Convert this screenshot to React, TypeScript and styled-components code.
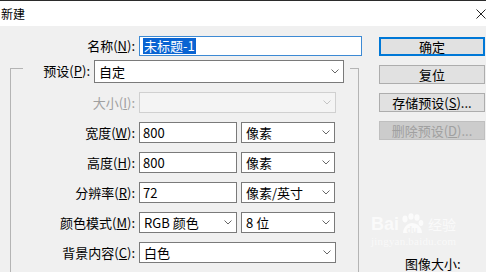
import React from "react";
import styled, { createGlobalStyle } from "styled-components";

const Global = createGlobalStyle`
  html, body { margin: 0; padding: 0; background: #f0f0f0; }
  body {
    font-family: "Noto Sans CJK SC", "Microsoft YaHei", sans-serif;
    font-size: 13px;
    color: #000;
    overflow: hidden;
  }
  * { box-sizing: border-box; }
`;

const Window = styled.div`
  position: relative;
  width: 486px;
  height: 272px;
  overflow: hidden;
  background: #f0f0f0;
  border-top: 1px solid #2b2b2b;
`;

const TitleBar = styled.div`
  height: 25px;
  background: #fff;
  display: flex;
  align-items: center;
  justify-content: space-between;
  padding-left: 1px;
  font-size: 12px;
  line-height: 1;
`;

const CloseIcon = styled.svg`
  width: 10px;
  height: 10px;
  margin-top: 1px;
`;

const Body = styled.div`
  display: flex;
  padding-top: 10px;
`;

const LeftCol = styled.div`
  width: 362px;
  display: flex;
  flex-direction: column;
`;

const Row = styled.div<{ $h?: number }>`
  display: flex;
  align-items: center;
  gap: 4px;
  height: ${(p) => p.$h ?? 21}px;
`;

const Label = styled.label<{ $w: number; $disabled?: boolean; $top?: number }>`
  width: ${(p) => p.$w}px;
  margin-top: ${(p) => p.$top ?? 0}px;
  text-align: right;
  white-space: nowrap;
  font-size: 13px;
  line-height: 16px;
  color: ${(p) => (p.$disabled ? "#a0a0a0" : "#000")};
`;

const TextBox = styled.div<{ $w: number; $focus?: boolean }>`
  width: ${(p) => p.$w}px;
  height: 100%;
  background: #fff;
  border: 1px solid ${(p) => (p.$focus ? "#3d8ad4" : "#7a7a7a")};
  display: flex;
  align-items: center;
  padding-left: 3px;
  font-size: 13px;
  line-height: 16px;
  white-space: nowrap;
`;

const Selected = styled.span`
  background: #0a64d2;
  color: #fff;
  padding: 0 1px;
  line-height: 16px;
`;

const SelectBox = styled.div<{ $w: number; $disabled?: boolean }>`
  width: ${(p) => p.$w}px;
  height: 100%;
  background: ${(p) => (p.$disabled ? "#f4f4f4" : "#fff")};
  border: 1px solid ${(p) => (p.$disabled ? "#d0d0d0" : "#7a7a7a")};
  display: flex;
  align-items: center;
  justify-content: space-between;
  padding-left: 4px;
  padding-right: 4px;
  font-size: 13px;
  line-height: 16px;
  white-space: nowrap;
  color: #000;
`;

const Chevron = styled.svg`
  width: 8px;
  height: 5px;
  flex: none;
`;

const Group = styled.fieldset`
  margin: 4px 0 0 10px;
  padding: 15px 0 0 0;
  width: 349px;
  height: 240px;
  border: 1px solid #b4b4b4;
  border-bottom: none;
  min-width: 0;
`;

const Legend = styled.legend`
  margin-left: 12px;
  padding: 0 6px 0 0;
  display: flex;
  align-items: flex-start;
  gap: 4px;
  height: 17px;
`;

const LegendSelect = styled.div`
  height: 23px;
  display: flex;
`;

const Rows = styled.div`
  display: flex;
  flex-direction: column;
  gap: 9px;
`;

const RightCol = styled.div`
  margin-left: 17px;
  width: 106px;
  display: flex;
  flex-direction: column;
  gap: 9px;
  padding-top: 1px;
`;

const Button = styled.div<{ $default?: boolean; $disabled?: boolean }>`
  height: 19px;
  display: flex;
  align-items: center;
  justify-content: center;
  font-size: 13px;
  line-height: 16px;
  background: ${(p) => (p.$disabled ? "#cccccc" : "#e1e1e1")};
  color: ${(p) => (p.$disabled ? "#a0a0a0" : "#000")};
  border: 1px solid ${(p) => (p.$default ? "#0078d7" : p.$disabled ? "#bfbfbf" : "#adadad")};
  box-shadow: ${(p) => (p.$default ? "inset 0 0 0 1px #0078d7" : "none")};
  white-space: nowrap;
`;

const InfoLabel = styled.div`
  margin-top: 107px;
  padding-left: 26px;
  font-size: 13px;
  line-height: 16px;
  white-space: nowrap;
`;

const Watermark = styled.div`
  position: absolute;
  left: 371px;
  top: 212px;
  color: rgba(255, 255, 255, 0.7);
  font-family: "Liberation Sans", Arial, sans-serif;
  pointer-events: none;
`;

const WmMain = styled.div`
  display: flex;
  align-items: flex-end;
  gap: 1px;
  font-size: 18px;
  font-weight: bold;
  line-height: 22px;
`;

const Paw = styled.svg`
  width: 26px;
  height: 22px;
  margin: 0 -1px;
`;

const WmCn = styled.span`
  font-family: "Noto Sans CJK SC", sans-serif;
  font-size: 14px;
  font-weight: normal;
  margin-left: 3px;
`;

const WmSub = styled.div`
  font-family: "Liberation Serif", serif;
  font-size: 11px;
  line-height: 12px;
  letter-spacing: 0.2px;
  color: rgba(255, 255, 255, 0.6);
`;

const Arrow: React.FC<{ disabled?: boolean }> = ({ disabled }) => (
  <Chevron viewBox="0 0 8 5">
    <polyline
      points="0.5,0.5 4,4 7.5,0.5"
      fill="none"
      stroke={disabled ? "#c4c4c4" : "#666"}
      strokeWidth="1"
    />
  </Chevron>
);

const Select: React.FC<{ w: number; value?: string; disabled?: boolean }> = ({
  w,
  value,
  disabled,
}) => (
  <SelectBox $w={w} $disabled={disabled}>
    <span>{value}</span>
    <Arrow disabled={disabled} />
  </SelectBox>
);

export default function App() {
  return (
    <>
      <Global />
      <Window>
        <TitleBar>
          <span>新建</span>
          <CloseIcon viewBox="0 0 10 10">
            <line x1="0.5" y1="0.5" x2="9.5" y2="9.5" stroke="#222" strokeWidth="1" />
            <line x1="9.5" y1="0.5" x2="0.5" y2="9.5" stroke="#222" strokeWidth="1" />
          </CloseIcon>
        </TitleBar>
        <Body>
          <LeftCol>
            <Row $h={20}>
              <Label $w={135}>
                名称(<u>N</u>):
              </Label>
              <TextBox $w={223} $focus>
                <Selected>未标题-1</Selected>
              </TextBox>
            </Row>
            <Group>
              <Legend>
                <Label $w={67} $top={3}>
                  预设(<u>P</u>):
                </Label>
                <LegendSelect>
                  <Select w={250} value="自定" />
                </LegendSelect>
              </Legend>
              <Rows>
                <Row>
                  <Label $w={124} $disabled>
                    大小(<u>I</u>):
                  </Label>
                  <Select w={197} disabled />
                </Row>
                <Row>
                  <Label $w={124}>
                    宽度(<u>W</u>):
                  </Label>
                  <TextBox $w={98}>800</TextBox>
                  <Select w={94} value="像素" />
                </Row>
                <Row>
                  <Label $w={124}>
                    高度(<u>H</u>):
                  </Label>
                  <TextBox $w={98}>800</TextBox>
                  <Select w={94} value="像素" />
                </Row>
                <Row>
                  <Label $w={124}>
                    分辨率(<u>R</u>):
                  </Label>
                  <TextBox $w={98}>72</TextBox>
                  <Select w={94} value="像素/英寸" />
                </Row>
                <Row>
                  <Label $w={124}>
                    颜色模式(<u>M</u>):
                  </Label>
                  <Select w={98} value="RGB 颜色" />
                  <Select w={94} value="8 位" />
                </Row>
                <Row>
                  <Label $w={124}>
                    背景内容(<u>C</u>):
                  </Label>
                  <Select w={197} value="白色" />
                </Row>
              </Rows>
            </Group>
          </LeftCol>
          <RightCol>
            <Button $default>确定</Button>
            <Button>复位</Button>
            <Button>
              存储预设(<u>S</u>)...
            </Button>
            <Button $disabled>
              删除预设(<u>D</u>)...
            </Button>
            <InfoLabel>图像大小:</InfoLabel>
          </RightCol>
        </Body>
        <Watermark>
          <WmMain>
            Bai
            <Paw viewBox="0 0 26 22">
              <ellipse cx="6" cy="6" rx="2.6" ry="3.4" fill="currentColor" />
              <ellipse cx="12" cy="3.5" rx="2.6" ry="3.2" fill="currentColor" />
              <ellipse cx="18" cy="4.5" rx="2.6" ry="3.2" fill="currentColor" />
              <ellipse cx="22" cy="10" rx="2.4" ry="3" fill="currentColor" />
              <path d="M4 20 C4 14 9 10 13 10 C18 10 23 14 23 20 Z" fill="currentColor" />
              <text x="7.5" y="19.5" fontSize="9" fontFamily="Liberation Sans, sans-serif" fontWeight="bold" fill="#f0f0f0">du</text>
            </Paw>
            <WmCn>经验</WmCn>
          </WmMain>
          <WmSub>jingyan.baidu.com</WmSub>
        </Watermark>
      </Window>
    </>
  );
}
